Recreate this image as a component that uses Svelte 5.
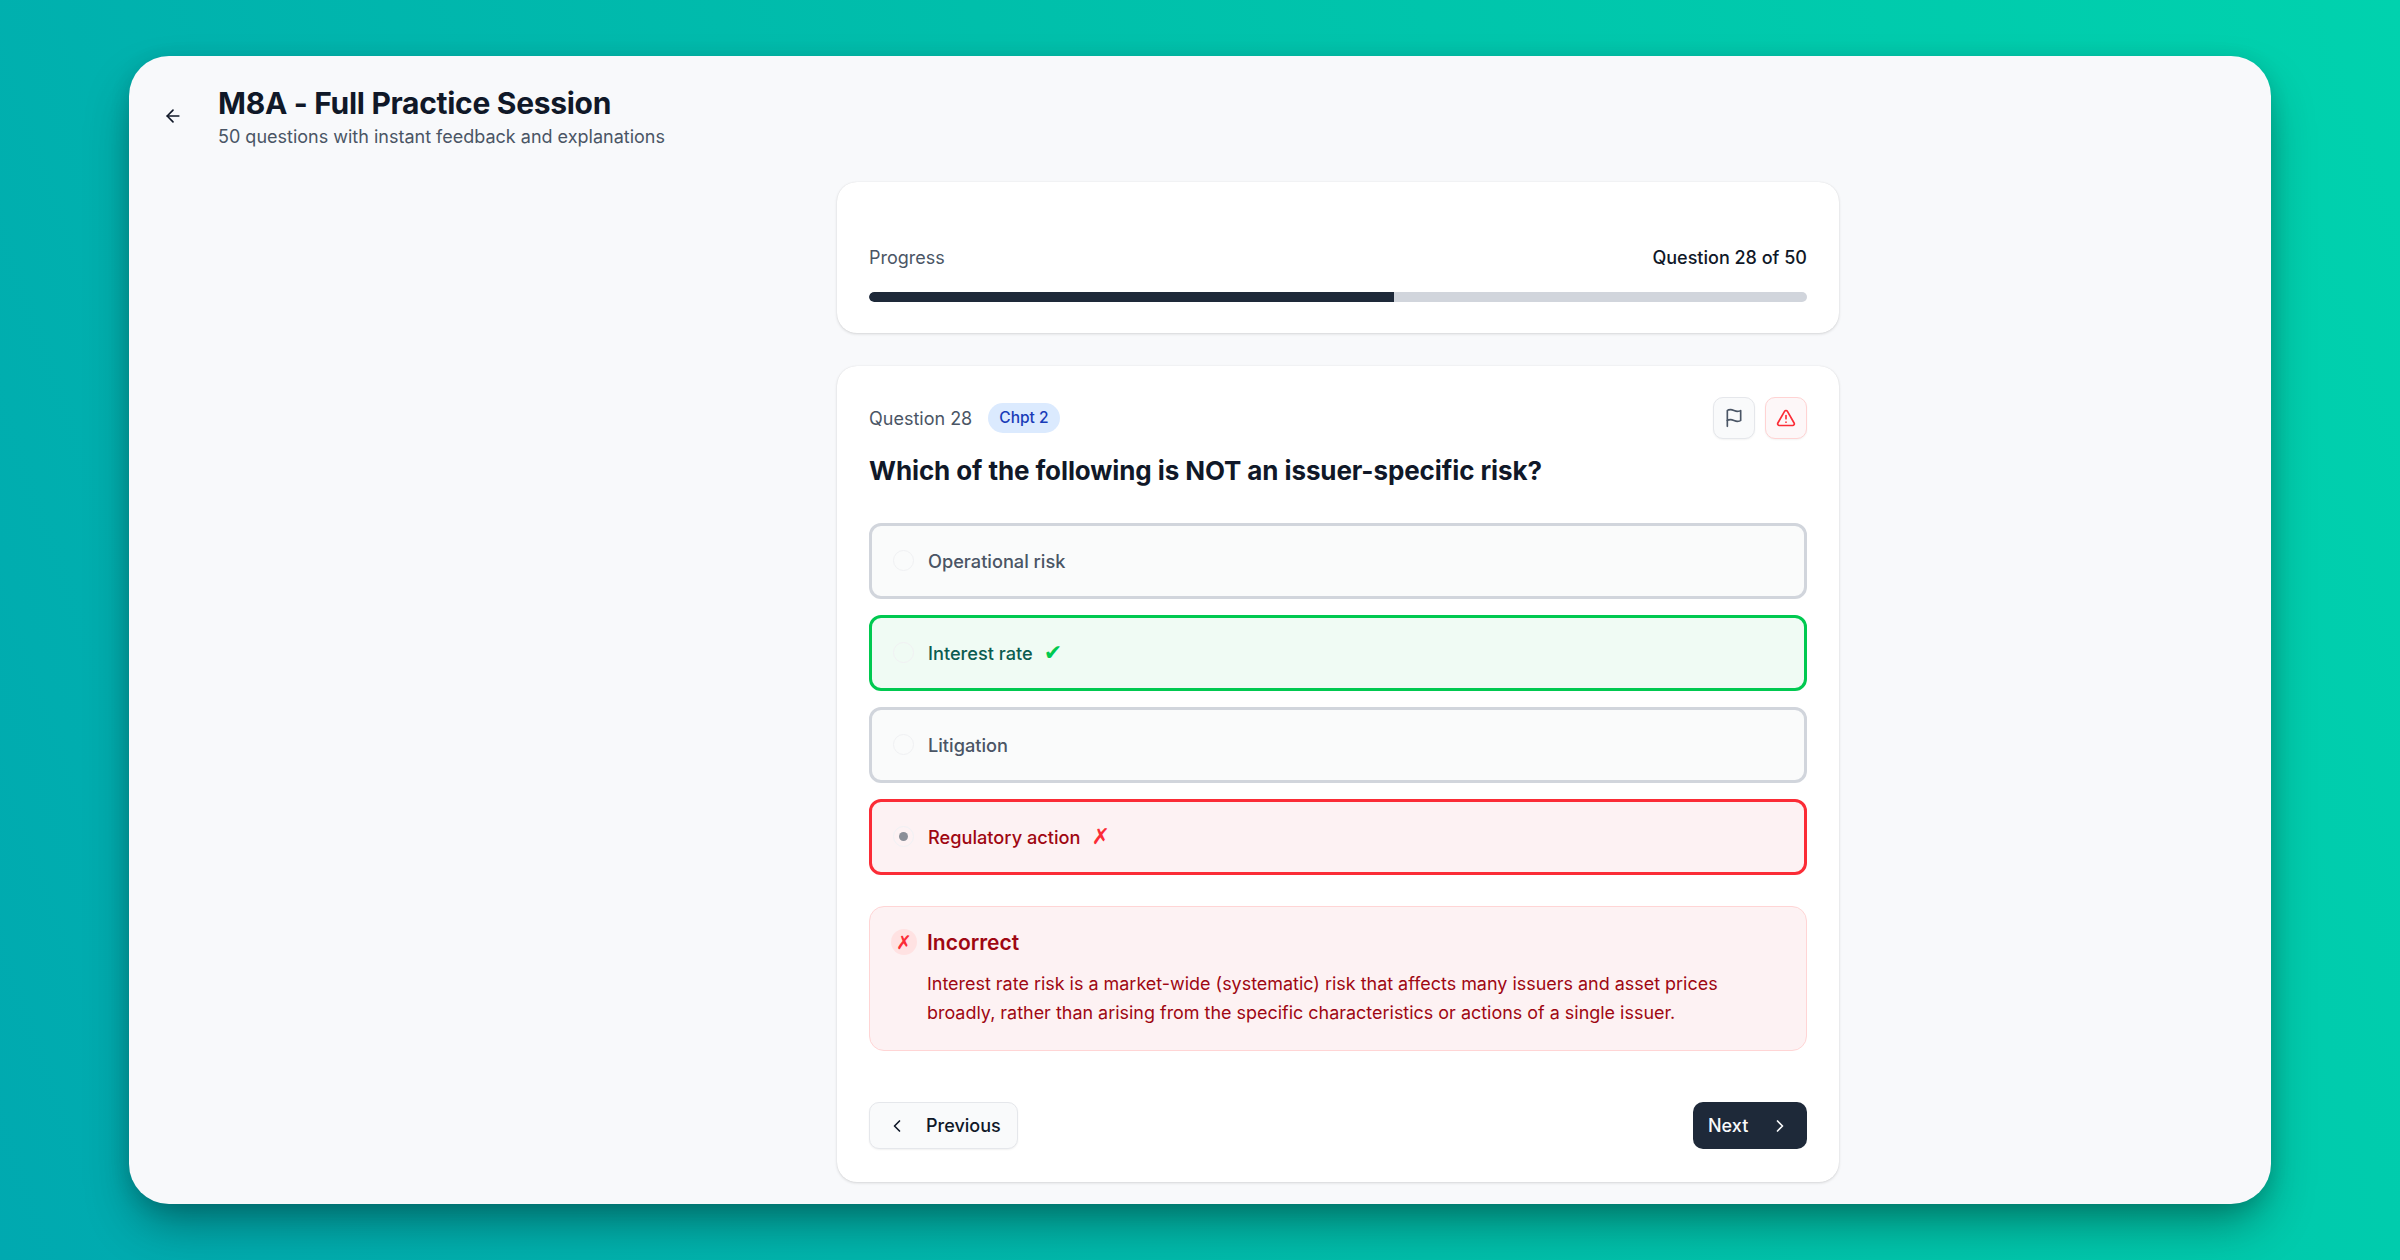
<script>
  const options = [
    { label: 'Operational risk', state: '' },
    { label: 'Interest rate', state: 'correct', mark: '✔' },
    { label: 'Litigation', state: '' },
    { label: 'Regulatory action', state: 'wrong', mark: '✗', picked: true }
  ];
  const current = 28;
  const total = 50;
</script>

<div class="stage">
  <div class="window">
    <header class="top">
      <button class="back" aria-label="Back">
        <svg width="20" height="20" viewBox="0 0 24 24" fill="none" stroke="currentColor" stroke-width="2" stroke-linecap="round" stroke-linejoin="round">
          <path d="m12 19-7-7 7-7" />
          <path d="M19 12H5" />
        </svg>
      </button>
      <div class="heading">
        <h1>M8A - Full Practice Session</h1>
        <p>50 questions with instant feedback and explanations</p>
      </div>
    </header>

    <main class="column">
      <section class="card progress">
        <div class="progress-labels">
          <span class="muted">Progress</span>
          <span class="count">Question {current} of {total}</span>
        </div>
        <div class="track">
          <div class="fill" style="width: {(current / total) * 100}%"></div>
        </div>
      </section>

      <section class="card question">
        <div class="q-head">
          <div class="q-meta">
            <span class="muted">Question {current}</span>
            <span class="badge">Chpt 2</span>
          </div>
          <div class="q-actions">
            <button class="square" aria-label="Flag">
              <svg width="20" height="20" viewBox="0 0 24 24" fill="none" stroke="currentColor" stroke-width="2" stroke-linecap="round" stroke-linejoin="round">
                <path d="M4 15s1-1 4-1 5 2 8 2 4-1 4-1V3s-1 1-4 1-5-2-8-2-4 1-4 1z" />
                <path d="M4 22v-7" />
              </svg>
            </button>
            <button class="square alert" aria-label="Report">
              <svg width="20" height="20" viewBox="0 0 24 24" fill="none" stroke="currentColor" stroke-width="2" stroke-linecap="round" stroke-linejoin="round">
                <path d="m21.73 18-8-14a2 2 0 0 0-3.48 0l-8 14A2 2 0 0 0 4 21h16a2 2 0 0 0 1.73-3" />
                <path d="M12 9v4" />
                <path d="M12 17h.01" />
              </svg>
            </button>
          </div>
        </div>

        <h2>Which of the following is NOT an issuer-specific risk?</h2>

        <div class="options">
          {#each options as opt}
            <div class="option {opt.state}">
              <span class="radio" class:picked={opt.picked}></span>
              <span class="opt-label">{opt.label}</span>
              {#if opt.mark}<span class="mark">{opt.mark}</span>{/if}
            </div>
          {/each}
        </div>

        <div class="feedback">
          <div class="fb-head">
            <span class="fb-icon">✗</span>
            <strong>Incorrect</strong>
          </div>
          <p>Interest rate risk is a market-wide (systematic) risk that affects many issuers and asset prices broadly, rather than arising from the specific characteristics or actions of a single issuer.</p>
        </div>

        <div class="nav">
          <button class="prev">
            <svg width="20" height="20" viewBox="0 0 24 24" fill="none" stroke="currentColor" stroke-width="2" stroke-linecap="round" stroke-linejoin="round"><path d="m15 18-6-6 6-6" /></svg>
            Previous
          </button>
          <button class="next">
            Next
            <svg width="20" height="20" viewBox="0 0 24 24" fill="none" stroke="currentColor" stroke-width="2" stroke-linecap="round" stroke-linejoin="round"><path d="m9 18 6-6-6-6" /></svg>
          </button>
        </div>
      </section>
    </main>
  </div>
</div>

<style>
  :global(body) {
    margin: 0;
    font-family: Inter, "Liberation Sans", sans-serif;
  }

  button {
    font: inherit;
    cursor: pointer;
  }

  .stage {
    width: 2400px;
    height: 1260px;
    box-sizing: border-box;
    padding: 56px 129px;
    background: linear-gradient(70deg, #00a9b0 0%, #00bfab 50%, #00d2ae 100%);
  }

  .window {
    height: 1148px;
    box-sizing: border-box;
    background: #f8f9fb;
    border-radius: 40px;
    box-shadow: 0 25px 50px -8px rgba(0, 0, 0, 0.38), 0 4px 20px rgba(0, 0, 0, 0.12);
    overflow: hidden;
    display: flex;
    flex-direction: column;
  }

  .top {
    display: flex;
    align-items: center;
    height: 126px;
    flex: none;
    box-sizing: border-box;
    padding: 0 0 0 34px;
  }

  .back {
    width: 20px;
    height: 20px;
    padding: 0;
    border: none;
    background: none;
    color: #101828;
    margin-right: 35px;
    margin-top: -6px;
  }

  .heading {
    margin-top: -5px;
  }

  .heading h1 {
    margin: 0;
    font-size: 30px;
    line-height: 36px;
    font-weight: 700;
    letter-spacing: -0.3px;
    color: #101828;
  }

  .heading p {
    margin: 4px 0 0;
    font-size: 18px;
    line-height: 24px;
    color: #4a5565;
  }

  .column {
    width: 1002px;
    margin-left: 708px;
    display: flex;
    flex-direction: column;
    gap: 33px;
  }

  .card {
    background: #fff;
    border-radius: 20px;
    box-shadow: 0 1px 3px rgba(0, 0, 0, 0.14), 0 0 1px rgba(0, 0, 0, 0.1);
    box-sizing: border-box;
    padding: 0 32px;
  }

  .progress {
    height: 151px;
    padding-top: 63px;
  }

  .progress-labels {
    display: flex;
    justify-content: space-between;
    font-size: 18px;
    line-height: 26px;
  }

  .muted {
    color: #4a5565;
  }

  .count {
    font-weight: 500;
    color: #101828;
  }

  .track {
    height: 10px;
    margin-top: 21px;
    border-radius: 5px;
    background: #d1d5dc;
    overflow: hidden;
  }

  .fill {
    height: 100%;
    background: #1e2939;
    border-radius: 5px 0 0 5px;
  }

  .question {
    height: 816px;
    padding-top: 31px;
  }

  .q-head {
    display: flex;
    justify-content: space-between;
    align-items: center;
  }

  .q-meta {
    display: flex;
    align-items: center;
    gap: 16px;
    font-size: 18px;
  }

  .badge {
    height: 30px;
    line-height: 30px;
    padding: 0 11px;
    border-radius: 15px;
    background: #dbeafe;
    color: #193cb8;
    font-size: 15.5px;
    font-weight: 500;
  }

  .q-actions {
    display: flex;
    gap: 10px;
  }

  .square {
    width: 42px;
    height: 42px;
    padding: 0;
    border-radius: 10px;
    border: 1.5px solid #e5e7eb;
    background: #f9fafb;
    color: #4a5565;
    display: flex;
    align-items: center;
    justify-content: center;
    box-shadow: 0 1px 2px rgba(0, 0, 0, 0.05);
  }

  .square.alert {
    border-color: #ffd3d3;
    background: #fdf7f8;
    color: #fb2c36;
  }

  h2 {
    margin: 14px 0 0;
    font-size: 26px;
    line-height: 36px;
    font-weight: 700;
    letter-spacing: -0.1px;
    color: #101828;
  }

  .options {
    display: flex;
    flex-direction: column;
    gap: 16px;
    margin-top: 34px;
  }

  .option {
    height: 76px;
    box-sizing: border-box;
    display: flex;
    align-items: center;
    padding: 0 20px 0 21px;
    border: 3px solid #d1d5dc;
    border-radius: 12px;
    background: #fafbfb;
    color: #4a5565;
    font-size: 18.2px;
    font-weight: 500;
  }

  .option.correct {
    border-color: #00c950;
    background: #f0fbf4;
    color: #0b5c50;
  }

  .option.wrong {
    border-color: #fb2c36;
    background: #fdf2f3;
    color: #9f0712;
  }

  .radio {
    width: 21px;
    height: 21px;
    flex: none;
    margin: -2px 14px 0 0;
    border-radius: 50%;
    border: 1px solid #f0f1f3;
    box-sizing: border-box;
    display: flex;
    align-items: center;
    justify-content: center;
  }

  .radio.picked::after {
    content: '';
    width: 9px;
    height: 9px;
    border-radius: 50%;
    background: #8b8f98;
  }

  .mark {
    margin-left: 11px;
    font-family: "DejaVu Sans", sans-serif;
    font-size: 22px;
    line-height: 1;
    font-weight: 700;
  }

  .correct .mark {
    color: #00c950;
  }

  .wrong .mark {
    color: #fb2c36;
  }

  .feedback {
    margin-top: 31px;
    height: 145px;
    box-sizing: border-box;
    border: 1.5px solid #ffd5d5;
    border-radius: 15px;
    background: #fdf2f3;
    padding: 22px 20px 0 21px;
    color: #9f0712;
  }

  .fb-head {
    display: flex;
    align-items: center;
    gap: 10px;
  }

  .fb-icon {
    width: 26px;
    height: 26px;
    border-radius: 50%;
    background: #ffe2e2;
    color: #fb2c36;
    font-family: "DejaVu Sans", sans-serif;
    font-size: 19px;
    font-weight: 700;
    line-height: 26px;
    text-align: center;
  }

  .fb-head strong {
    font-size: 21px;
    font-weight: 600;
  }

  .feedback p {
    margin: 14px 0 0 36px;
    max-width: 830px;
    font-size: 17.95px;
    line-height: 29px;
  }

  .nav {
    display: flex;
    justify-content: space-between;
    margin-top: 51px;
  }

  .nav button {
    height: 47px;
    display: flex;
    align-items: center;
    border-radius: 10px;
    font-size: 18px;
    font-weight: 500;
  }

  .prev {
    width: 149px;
    gap: 19px;
    padding: 0 0 0 17px;
    border: 1.5px solid #e5e7eb;
    background: #f9fafb;
    color: #101828;
    box-shadow: 0 1px 2px rgba(0, 0, 0, 0.06);
  }

  .next {
    width: 114px;
    gap: 22px;
    padding: 0 0 0 15px;
    border: none;
    background: #1e2939;
    color: #f9fafb;
  }
</style>
